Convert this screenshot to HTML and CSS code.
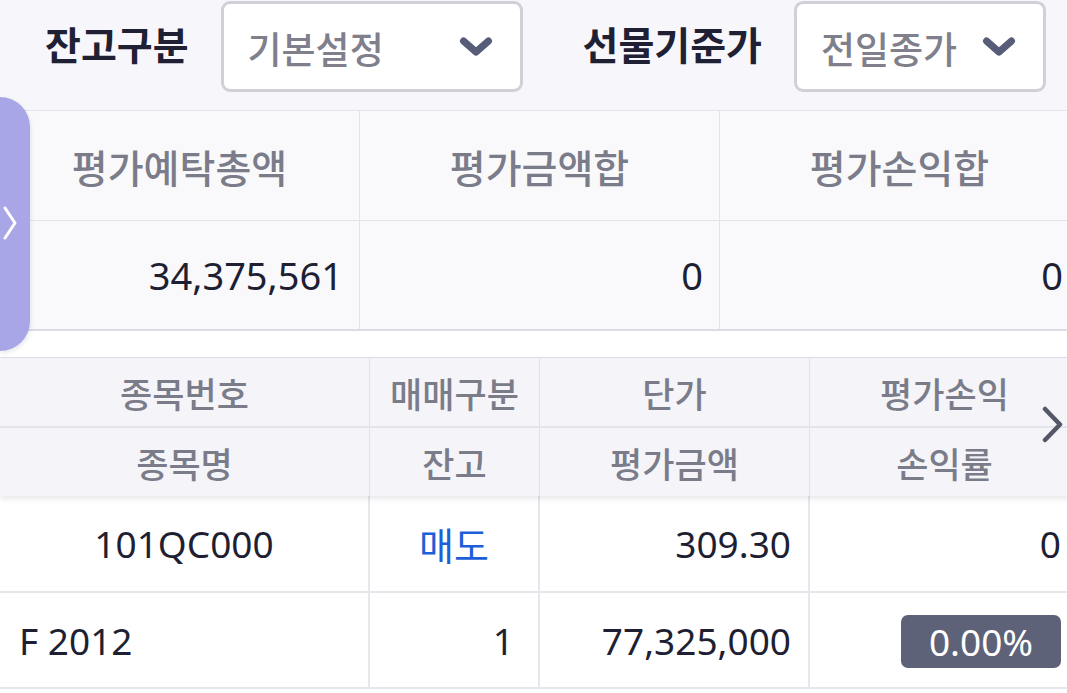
FILE: index.html
```html
<!DOCTYPE html>
<html lang="ko">
<head>
<meta charset="utf-8">
<title>잔고</title>
<link rel="stylesheet" href="styles.css">
</head>
<body>
<div class="page">
  <div class="filters">
    <div class="filter">
      <span class="label">잔고구분</span>
      <div class="select s1">
        <span class="sel-text">기본설정</span>
        <svg class="chev" width="34" height="22" viewBox="0 0 34 22"><path d="M4.5 5 L17 16 L29.5 5" fill="none" stroke="#575c78" stroke-width="7" stroke-linecap="round" stroke-linejoin="round"/></svg>
      </div>
    </div>
    <div class="filter">
      <span class="label">선물기준가</span>
      <div class="select s2">
        <span class="sel-text">전일종가</span>
        <svg class="chev" width="34" height="22" viewBox="0 0 34 22"><path d="M4.5 5 L17 16 L29.5 5" fill="none" stroke="#575c78" stroke-width="7" stroke-linecap="round" stroke-linejoin="round"/></svg>
      </div>
    </div>
  </div>

  <div class="summary">
    <div class="sum-head">평가예탁총액</div>
    <div class="sum-head">평가금액합</div>
    <div class="sum-head">평가손익합</div>
    <div class="sum-val">34,375,561</div>
    <div class="sum-val">0</div>
    <div class="sum-val">0</div>
  </div>

  <div class="holdings">
    <div class="hold-head">
      <div class="hc r1">종목번호</div>
      <div class="hc r1">매매구분</div>
      <div class="hc r1">단가</div>
      <div class="hc r1">평가손익</div>
      <div class="hc r2">종목명</div>
      <div class="hc r2">잔고</div>
      <div class="hc r2">평가금액</div>
      <div class="hc r2">손익률</div>
    </div>
    <div class="hold-body">
      <div class="dc d1 center">101QC000</div>
      <div class="dc d1 center sell">매도</div>
      <div class="dc d1 right">309.30</div>
      <div class="dc d1 right">0</div>
      <div class="dc d2 left">F 2012</div>
      <div class="dc d2 right qty">1</div>
      <div class="dc d2 right">77,325,000</div>
      <div class="dc d2 right badge-cell"><span class="badge">0.00%</span></div>
    </div>
  </div>

  <div class="side-tab">
    <svg width="16" height="36" viewBox="0 0 16 36"><path d="M4 3 L14 18 L4 33" fill="none" stroke="#ffffff" stroke-width="3" stroke-linecap="round" stroke-linejoin="round"/></svg>
  </div>
  <div class="more-arrow">
    <svg width="22" height="38" viewBox="0 0 22 38"><path d="M3 3 L18 18.5 L3 34" fill="none" stroke="#545766" stroke-width="4.5" stroke-linecap="round" stroke-linejoin="round"/></svg>
  </div>
</div>
</body>
</html>
```

FILE: styles.css
```css
html, body {
  margin: 0;
  padding: 0;
  background: #ffffff;
  overflow: hidden;
}

.page {
  position: relative;
  width: 1067px;
  height: 693px;
  overflow: hidden;
  font-family: "Noto Sans", "Noto Sans CJK KR", sans-serif;
  color: #1e1f33;
}

/* ---------- filters ---------- */
.filters {
  display: flex;
  align-items: flex-start;
  gap: 60px;
  height: 110px;
  box-sizing: border-box;
  padding: 1px 0 0 45px;
  background: #f7f7fb;
}

.filter {
  display: flex;
  align-items: center;
  gap: 32px;
  height: 91px;
}

.label {
  font-family: "Noto Sans CJK KR", sans-serif;
  font-size: 39px;
  font-weight: 700;
  color: #1f2033;
  margin-bottom: 8px;
}

.select {
  display: flex;
  align-items: center;
  justify-content: space-between;
  height: 91px;
  box-sizing: border-box;
  padding: 0 27px 0 24px;
  border: 3px solid #d0d0d8;
  border-radius: 9px;
  background: #ffffff;
}

.s1 { width: 302px; }
.s2 { width: 252px; }

.sel-text {
  font-family: "Noto Sans CJK KR", sans-serif;
  font-size: 37px;
  font-weight: 500;
  color: #7f808b;
  margin-top: 2px;
}

.chev { display: block; }

/* ---------- summary ---------- */
.summary {
  display: grid;
  grid-template-columns: 360px 360px 360px;
  width: 1080px;
  background: #f9f9fc;
  border-top: 1px solid #e4e4ec;
  border-bottom: 2px solid #dcdce3;
}

.sum-head {
  display: flex;
  align-items: center;
  justify-content: center;
  height: 109px;
  border-right: 1px solid #e2e2ea;
  border-bottom: 1px solid #e4e4ec;
  font-family: "Noto Sans CJK KR", sans-serif;
  font-size: 39px;
  font-weight: 500;
  color: #7b7c89;
}

.sum-val {
  display: flex;
  align-items: center;
  justify-content: flex-end;
  height: 108px;
  padding-right: 16px;
  border-right: 1px solid #e2e2ea;
  font-size: 38px;
  color: #1e1f33;
}

/* ---------- holdings ---------- */
.holdings {
  margin-top: 26px;
  width: 1080px;
  border-top: 1px solid #dedee6;
}

.hold-head {
  display: grid;
  grid-template-columns: 370px 170px 270px 270px;
  grid-template-rows: 70px 68px;
  background: #f4f4f9;
  box-shadow: 0 3px 5px rgba(40, 40, 70, 0.10);
  position: relative;
  z-index: 1;
}

.hc {
  display: flex;
  align-items: center;
  justify-content: center;
  border-right: 1px solid #e2e2ea;
  font-family: "Noto Sans CJK KR", sans-serif;
  font-size: 35px;
  font-weight: 500;
  color: #7b7c89;
}

.hc.r1 { border-bottom: 2px solid #e4e4ec; }

.hold-body {
  display: grid;
  grid-template-columns: 370px 170px 270px 270px;
  grid-template-rows: 97px 96px;
  background: #ffffff;
}

.dc {
  display: flex;
  align-items: center;
  border-right: 2px solid #e6e6ed;
  border-bottom: 2px solid #e6e6ed;
  font-size: 37px;
  color: #1e1f33;
}

.dc.center { justify-content: center; }
.dc.right { justify-content: flex-end; padding-right: 17px; }
.dc.left { justify-content: flex-start; padding-left: 19px; }
.dc.qty { padding-right: 24px; }

.sell {
  font-family: "Noto Sans CJK KR", sans-serif;
  font-size: 38px;
  color: #1d5fd8;
}

.badge-cell { padding-right: 16px; }

.badge {
  display: flex;
  align-items: center;
  justify-content: center;
  width: 160px;
  height: 53px;
  border-radius: 7px;
  background: #5e6279;
  color: #ffffff;
  font-size: 37px;
  margin-top: 3px;
}

/* ---------- overlays ---------- */
.side-tab {
  position: absolute;
  left: 0;
  top: 97px;
  width: 30px;
  height: 254px;
  background: #a8a6e6;
  border-radius: 0 30px 30px 0;
  box-shadow: 1px 2px 4px rgba(60, 60, 120, 0.12);
  display: flex;
  align-items: center;
  z-index: 3;
}

.side-tab svg {
  display: block;
  margin-left: 1px;
  margin-top: -2px;
}

.more-arrow {
  position: absolute;
  left: 1042px;
  top: 406px;
  z-index: 3;
}

.more-arrow svg { display: block; }
```
